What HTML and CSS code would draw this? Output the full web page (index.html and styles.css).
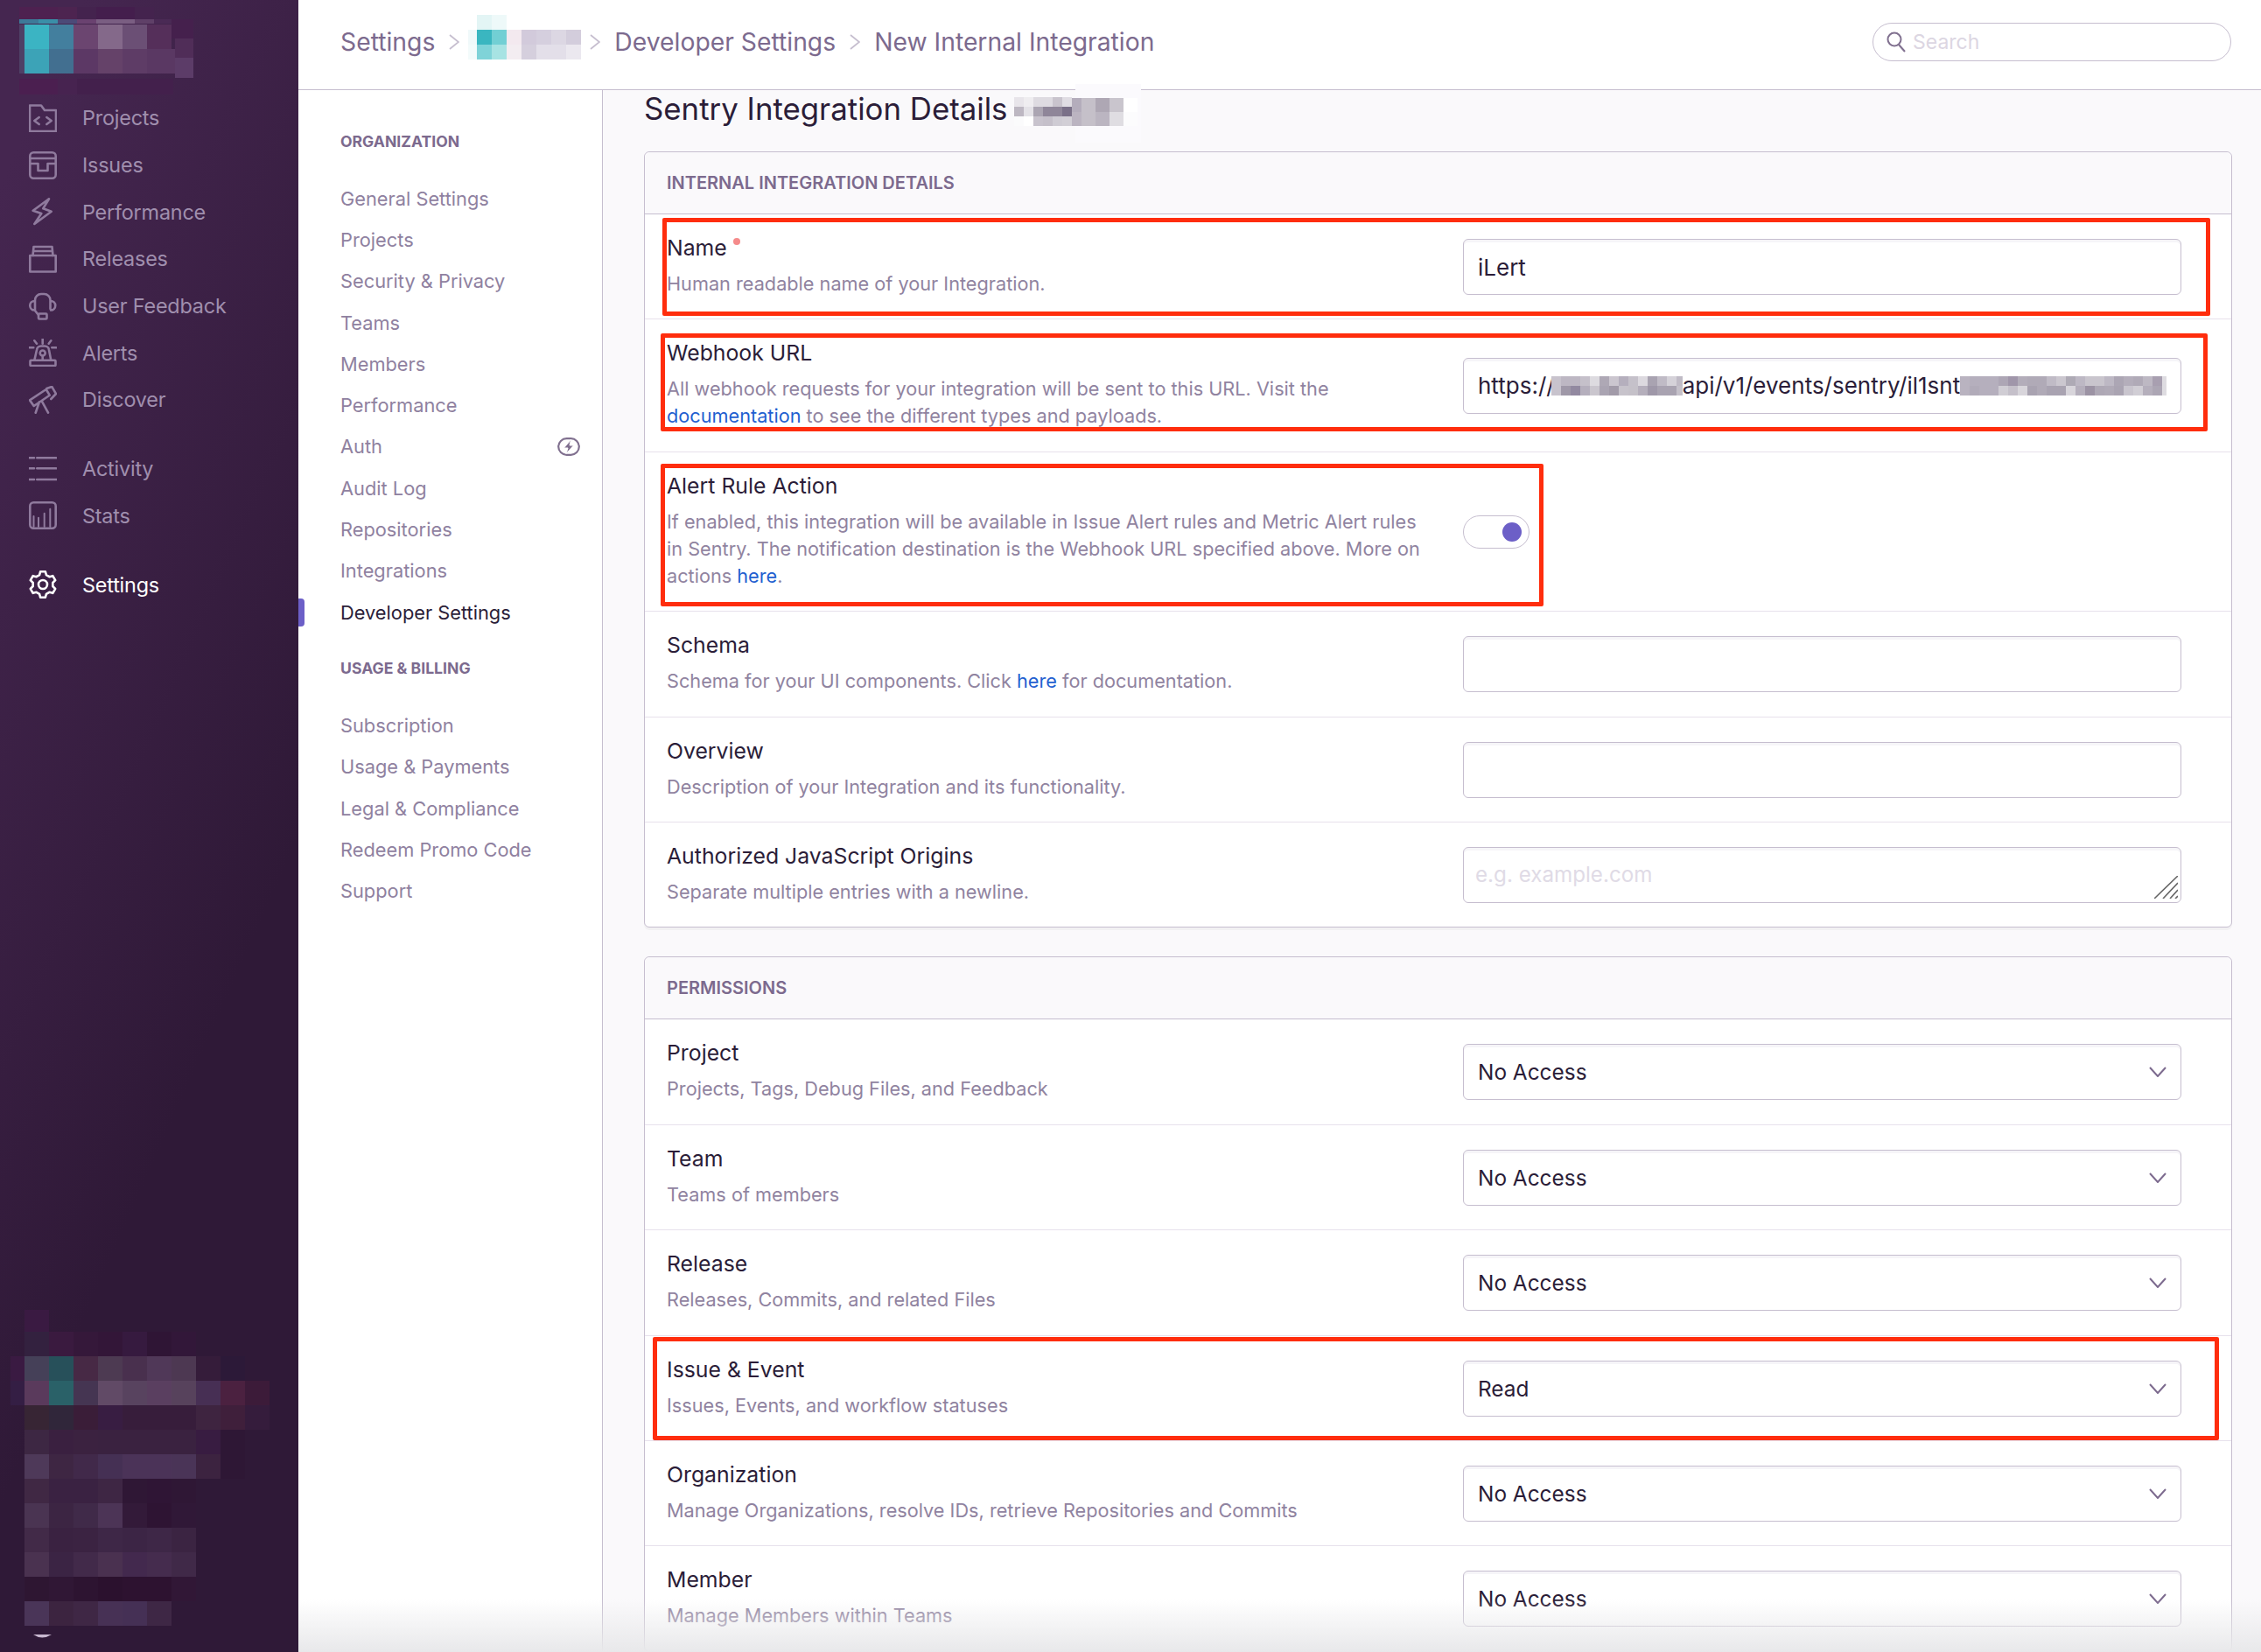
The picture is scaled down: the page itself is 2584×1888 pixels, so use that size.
FILE: index.html

```html
<!DOCTYPE html>
<html lang="en">
<head>
<meta charset="UTF-8">
<title>New Internal Integration</title>
<link rel="stylesheet" href="styles.css">
</head>
<body>
<div class="app">
  <aside class="sidebar">
    <svg class="org-logo" width="341" height="108" viewBox="0 0 341 108">
      <rect x="22" y="8" width="44" height="14" fill="#4e2150"/><rect x="66" y="8" width="22" height="14" fill="#4d2450"/>
      <rect x="88" y="8" width="22" height="14" fill="#44234e"/><rect x="110" y="8" width="44" height="14" fill="#441e4d"/>
      <rect x="154" y="8" width="22" height="14" fill="#44234e"/>
      <rect x="22" y="22" width="22" height="5" fill="#3d7a99"/><rect x="44" y="22" width="22" height="5" fill="#3a8fa8"/>
      <rect x="66" y="22" width="22" height="5" fill="#4c4a78"/><rect x="88" y="22" width="22" height="5" fill="#6a4270"/>
      <rect x="110" y="22" width="44" height="5" fill="#7a5e82"/><rect x="154" y="22" width="22" height="5" fill="#5f4068"/>
      <rect x="176" y="22" width="22" height="5" fill="#4a2a55"/>
      <rect x="22" y="28" width="6" height="56" fill="#4e4066"/>
      <g class="cell-28">
        <rect x="28" y="28" fill="#3bb4c3"/><rect x="56" y="28" fill="#437f9e"/><rect x="84" y="28" fill="#6b4570"/>
        <rect x="112" y="28" fill="#84698a"/><rect x="140" y="28" fill="#6b4f75"/><rect x="168" y="28" fill="#552f5a"/>
        <rect x="28" y="56" fill="#3ca3b7"/><rect x="56" y="56" fill="#426f90"/><rect x="84" y="56" fill="#5c3865"/>
        <rect x="112" y="56" fill="#654269"/><rect x="140" y="56" fill="#5e3c66"/><rect x="168" y="56" fill="#5a3863"/>
      </g>
      <rect x="196" y="22" width="25" height="22" fill="#45204d"/><rect x="200" y="44" width="21" height="22" fill="#502d58"/>
      <rect x="196" y="56" width="4" height="28" fill="#5a3863"/><rect x="200" y="66" width="21" height="23" fill="#5c3c68"/>
      <rect x="22" y="90" width="44" height="18" fill="#4b1f50"/><rect x="66" y="90" width="22" height="18" fill="#472350"/>
      <rect x="88" y="90" width="110" height="18" fill="#43204c"/>
    </svg>

    <ul class="side-group">
      <li class="side-item">
        <svg class="side-icon" viewBox="0 0 32 32"><path d="M1 1.5H14L18 7H31V31H1Z"/><path d="M11.7 15L6.3 19L11.7 23M20.3 15L25.7 19L20.3 23"/></svg>
        Projects
      </li>
      <li class="side-item">
        <svg class="side-icon" viewBox="0 0 32 32"><rect x="1.3" y="1.3" width="29.4" height="29.4" rx="4"/><path d="M1.3 8H30.7M1.3 14H10.5V22H21.5V14H30.7"/></svg>
        Issues
      </li>
      <li class="side-item">
        <svg class="side-icon" viewBox="0 0 32 32"><path d="M23 1.3L4.7 14.7L14.3 18L6.3 30L25.7 15.7L16.3 12.3Z"/></svg>
        Performance
      </li>
      <li class="side-item">
        <svg class="side-icon" viewBox="0 0 32 32"><rect x="1.3" y="12" width="29.4" height="18.5"/><path d="M4.5 12L5.5 2H26.5L27.5 12M5 7H27"/></svg>
        Releases
      </li>
      <li class="side-item">
        <svg class="side-icon" viewBox="0 0 32 32"><path d="M7 21V9A7 7 0 0 1 14 2H17.5A7 7 0 0 1 24.5 9V19M6.5 10A5 5 0 0 0 6.5 20.500M25 10A5 5 0 0 1 25 20.500M7 21L11 26"/><rect x="11" y="24.500" width="9.500" height="6" rx="1"/></svg>
        User Feedback
      </li>
      <li class="side-item">
        <svg class="side-icon" viewBox="0 0 32 32"><path d="M15.700 .3V5.700M6.300 2.300L9 5.700M25.300 2.300L22.700 5.700M.3 10.300H5.300M26.300 10.300H31.300M6.300 24.700L9 13A5 5 0 0 1 14 8.500H18A5 5 0 0 1 23 13L25.300 24.700"/><rect x="1.500" y="24.700" width="29" height="6.300" rx="1"/><circle cx="15.700" cy="16.500" r="3"/><path d="M15.700 19.500V24"/></svg>
        Alerts
      </li>
      <li class="side-item">
        <svg class="side-icon" viewBox="0 0 32 32"><path d="M1 16.300L5.700 23L23.700 10.700L19.700 4ZM20.300 3L26.300 .9L31 9L25.300 15M12 18.300L7.700 30.700M15.300 18.300L22 30.700"/></svg>
        Discover
      </li>
    </ul>

    <ul class="side-group">
      <li class="side-item">
        <svg class="side-icon" viewBox="0 0 32 32"><path d="M.3 3.300H6M9.300 3.300H31.300M.3 15.300H6M9.300 15.300H31.300M.3 28H6M9.300 28H31.300"/></svg>
        Activity
      </li>
      <li class="side-item">
        <svg class="side-icon" viewBox="0 0 32 32"><rect x="1.300" y="1.300" width="29.400" height="29.400" rx="4"/><path d="M5.500 29V17M11 29V18.700M17.700 29V13.700M24.300 29V8.700" stroke-width="2"/></svg>
        Stats
      </li>
    </ul>

    <ul class="side-group">
      <li class="side-item side-item-active">
        <svg class="side-icon" viewBox="0 0 32 32"><path d="M12.070 5.190L13.140 1.280H18.860L19.930 5.190L23.390 7.190L27.320 6.160L30.180 11.120L27.330 14V18L30.180 20.880L27.320 25.840L23.390 24.810L19.930 26.810L18.860 30.720H13.140L12.070 26.810L8.610 24.810L4.680 25.840L1.820 20.880L4.670 18V14L1.820 11.120L4.680 6.160L8.610 7.190Z"/><circle cx="16" cy="16" r="5"/></svg>
        Settings
      </li>
    </ul>

    <svg class="org-switcher" width="341" height="391" viewBox="0 0 341 391">
      <rect x="12" y="53" width="16" height="28" fill="#3a1a42"/><rect x="12" y="81" width="16" height="28" fill="#341e44"/>
      <g class="cell-28">
        <rect x="28" y="0" fill="#3a1a42"/>
        <rect x="28" y="25" fill="#33213f"/><rect x="56" y="25" fill="#3a1a3f"/><rect x="84" y="25" fill="#35183a"/><rect x="112" y="25" fill="#331638"/><rect x="140" y="25" fill="#361a3f"/><rect x="168" y="25" fill="#2f1535"/><rect x="196" y="25" fill="#321739"/>
        <rect x="28" y="53" fill="#454058"/><rect x="56" y="53" fill="#27505a"/><rect x="84" y="53" fill="#472945"/><rect x="112" y="53" fill="#4d3a52"/><rect x="140" y="53" fill="#49304e"/><rect x="168" y="53" fill="#503858"/><rect x="196" y="53" fill="#4d3852"/><rect x="224" y="53" fill="#351c3a"/><rect x="252" y="53" fill="#2c1938"/>
        <rect x="28" y="81" fill="#5a3a5c"/><rect x="56" y="81" fill="#2a6168"/><rect x="84" y="81" fill="#453552"/><rect x="112" y="81" fill="#614a66"/><rect x="140" y="81" fill="#58435f"/><rect x="168" y="81" fill="#5a3f60"/><rect x="196" y="81" fill="#57425c"/><rect x="224" y="81" fill="#472f54"/><rect x="252" y="81" fill="#4b2140"/><rect x="280" y="81" fill="#3c1b39"/>
        <rect x="28" y="109" fill="#372534"/><rect x="56" y="109" fill="#30263a"/><rect x="84" y="109" fill="#3a1d38"/><rect x="112" y="109" fill="#381d42"/><rect x="140" y="109" fill="#371d3b"/><rect x="168" y="109" fill="#371d3b"/><rect x="196" y="109" fill="#371d3b"/><rect x="224" y="109" fill="#3e2440"/><rect x="252" y="109" fill="#3f1f3b"/><rect x="280" y="109" fill="#351c3c"/>
        <rect x="28" y="137" fill="#3d2743"/><rect x="56" y="137" fill="#3a2040"/><rect x="84" y="137" fill="#3b2240"/><rect x="112" y="137" fill="#3a2240"/><rect x="140" y="137" fill="#3a2240"/><rect x="168" y="137" fill="#3a2240"/><rect x="196" y="137" fill="#3a2240"/><rect x="224" y="137" fill="#381c41"/><rect x="252" y="137" fill="#2e1735"/>
        <rect x="28" y="165" fill="#4e3959"/><rect x="56" y="165" fill="#3e2643"/><rect x="84" y="165" fill="#41294a"/><rect x="112" y="165" fill="#453054"/><rect x="140" y="165" fill="#4b3358"/><rect x="168" y="165" fill="#4b3358"/><rect x="196" y="165" fill="#4a3457"/><rect x="224" y="165" fill="#3c2340"/><rect x="252" y="165" fill="#2e1735"/>
        <rect x="28" y="193" fill="#402844"/><rect x="56" y="193" fill="#3a2242"/><rect x="84" y="193" fill="#3a2242"/><rect x="112" y="193" fill="#3e2644"/><rect x="140" y="193" fill="#2f1735"/><rect x="168" y="193" fill="#2f1535"/><rect x="196" y="193" fill="#2f1735"/>
        <rect x="28" y="221" fill="#4a3452"/><rect x="56" y="221" fill="#3c2543"/><rect x="84" y="221" fill="#402a49"/><rect x="112" y="221" fill="#4c3456"/><rect x="140" y="221" fill="#331a39"/><rect x="168" y="221" fill="#2e1433"/><rect x="196" y="221" fill="#301837"/>
        <rect x="28" y="249" fill="#422a48"/><rect x="56" y="249" fill="#3a2241"/><rect x="84" y="249" fill="#3b2342"/><rect x="112" y="249" fill="#3e2747"/><rect x="140" y="249" fill="#3c2545"/><rect x="168" y="249" fill="#3e2747"/><rect x="196" y="249" fill="#3b2442"/>
        <rect x="28" y="277" fill="#4a3250"/><rect x="56" y="277" fill="#3b2444"/><rect x="84" y="277" fill="#422a4a"/><rect x="112" y="277" fill="#4a3150"/><rect x="140" y="277" fill="#43294e"/><rect x="168" y="277" fill="#452c4e"/><rect x="196" y="277" fill="#402948"/>
        <rect x="28" y="305" fill="#2e1632"/><rect x="56" y="305" fill="#301735"/><rect x="84" y="305" fill="#2d1431"/><rect x="112" y="305" fill="#2b112e"/><rect x="140" y="305" fill="#2d1230"/><rect x="168" y="305" fill="#2d1230"/><rect x="196" y="305" fill="#311736"/>
        <rect x="28" y="333" fill="#4a3558"/><rect x="56" y="333" fill="#3c2440"/><rect x="84" y="333" fill="#3f2745"/><rect x="112" y="333" fill="#473155"/><rect x="140" y="333" fill="#453055"/><rect x="168" y="333" fill="#3e2745"/>
      </g>
      <path d="M38 371H59Q48 378 38 371Z" fill="#c9b8d0"/>
    </svg>
  </aside>

  <div class="main">
    <header class="topbar">
      <div class="crumbs">
        <span class="crumb">Settings</span>
        <svg class="crumb-sep" viewBox="0 0 12 18"><path d="M1 1L11 9L1 17"/></svg>
        <svg class="crumb-org" width="129" height="51" viewBox="0 0 129 51">
          <g class="cell-17">
            <rect x="10" y="0" fill="#e3f5f5"/><rect x="27" y="0" fill="#eef9f9"/>
            <rect x="0" y="17" fill="#f0f9fa"/><rect x="10" y="17" fill="#3ab6c0"/><rect x="27" y="17" fill="#72cfd4"/><rect x="44" y="17" fill="#f3e9ef"/><rect x="61" y="17" fill="#d2cadb"/><rect x="78" y="17" fill="#d5cfde"/><rect x="95" y="17" fill="#dcd7e3"/><rect x="112" y="17" fill="#d3cddc"/>
            <rect x="0" y="34" fill="#f3fbfb"/><rect x="10" y="34" fill="#7fd3d8"/><rect x="27" y="34" fill="#a7e3e3"/><rect x="44" y="34" fill="#f3edf1"/><rect x="61" y="34" fill="#d5cfdd"/><rect x="78" y="34" fill="#e3dfe9"/><rect x="95" y="34" fill="#e3dfe9"/><rect x="112" y="34" fill="#ebe8ef"/>
          </g>
        </svg>
        <svg class="crumb-sep" viewBox="0 0 12 18"><path d="M1 1L11 9L1 17"/></svg>
        <span class="crumb">Developer Settings</span>
        <svg class="crumb-sep" viewBox="0 0 12 18"><path d="M1 1L11 9L1 17"/></svg>
        <span class="crumb">New Internal Integration</span>
      </div>
      <div class="search">
        <svg class="search-icon" viewBox="0 0 22 24"><circle cx="9" cy="9" r="7.500"/><path d="M14 15L21 23"/></svg>
        <span>Search</span>
      </div>
    </header>

    <div class="page">
      <nav class="sidenav">
        <h4 class="nav-title">ORGANIZATION</h4>
        <a class="nav-item">General Settings</a>
        <a class="nav-item">Projects</a>
        <a class="nav-item">Security &amp; Privacy</a>
        <a class="nav-item">Teams</a>
        <a class="nav-item">Members</a>
        <a class="nav-item">Performance</a>
        <a class="nav-item">Auth
          <svg class="nav-badge" viewBox="0 0 26 21"><rect x="1.200" y="1.200" width="23.600" height="18.600" rx="9.300"/><path class="bolt" d="M15.500 2.500L7.500 12H12L10 18.500L18.500 9H14Z"/></svg>
        </a>
        <a class="nav-item">Audit Log</a>
        <a class="nav-item">Repositories</a>
        <a class="nav-item">Integrations</a>
        <a class="nav-item nav-item-active">Developer Settings</a>
        <h4 class="nav-title">USAGE &amp; BILLING</h4>
        <a class="nav-item">Subscription</a>
        <a class="nav-item">Usage &amp; Payments</a>
        <a class="nav-item">Legal &amp; Compliance</a>
        <a class="nav-item">Redeem Promo Code</a>
        <a class="nav-item">Support</a>
      </nav>

      <main class="content">
        <h2 class="page-title">Sentry Integration Details
          <svg class="title-blur" width="145" height="67" viewBox="0 0 145 67">
            <rect x="70" y="0" width="75" height="67" fill="#fbfafd"/>
            <g class="cell-11">
              <rect x="0" y="15" fill="#e8e5ea"/><rect x="11" y="15" fill="#efedf0"/><rect x="22" y="15" fill="#dedbe1"/><rect x="33" y="15" fill="#dedbe1"/><rect x="44" y="15" fill="#c9c4cd"/><rect x="55" y="15" fill="#e0dde3"/>
              <rect x="0" y="26" fill="#bdb7c2"/><rect x="11" y="26" fill="#e4e2e7"/><rect x="22" y="26" fill="#aba5b2"/><rect x="33" y="26" fill="#8f8699"/><rect x="44" y="26" fill="#8f8699"/><rect x="55" y="26" fill="#7a7088"/>
              <rect x="0" y="37" fill="#fbfbfc"/><rect x="11" y="37" fill="#ffffff"/><rect x="22" y="37" fill="#c8c3cd"/><rect x="33" y="37" fill="#c5c0ca"/><rect x="44" y="37" fill="#cfccd4"/><rect x="55" y="37" fill="#d2cfd6"/>
            </g>
            <rect x="66" y="16" width="11" height="16" fill="#b4adbc"/><rect x="77" y="16" width="16" height="16" fill="#c5c0c9"/><rect x="93" y="16" width="16" height="16" fill="#aea7b4"/><rect x="109" y="16" width="16" height="16" fill="#c9c5cd"/><rect x="125" y="16" width="16" height="16" fill="#ffffff"/>
            <rect x="66" y="32" width="11" height="16" fill="#bbb4c1"/><rect x="77" y="32" width="16" height="16" fill="#c5c0c9"/><rect x="93" y="32" width="16" height="16" fill="#bbb5c1"/><rect x="109" y="32" width="16" height="16" fill="#dfdde2"/><rect x="125" y="32" width="16" height="16" fill="#fcfcfd"/>
          </svg>
        </h2>

        <section class="panel">
          <div class="panel-head">INTERNAL INTEGRATION DETAILS</div>

          <div class="row">
            <div class="row-label">
              <div class="label">Name<span class="required"></span></div>
              <div class="desc">Human readable name of your Integration.</div>
            </div>
            <div class="field">iLert</div>
            <div class="mark mark-name"></div>
          </div>

          <div class="row">
            <div class="row-label">
              <div class="label">Webhook URL</div>
              <div class="desc">All webhook requests for your integration will be sent to this URL. Visit the<br><a>documentation</a> to see the different types and payloads.</div>
            </div>
            <div class="field field-url">https://<svg class="url-blur" width="150" height="22" viewBox="0 0 150 22">
                <g class="cell-11">
                  <rect x="0" y="0" fill="#c8c3cd"/><rect x="11" y="0" fill="#bdb7c3"/><rect x="22" y="0" fill="#bdb7c3"/><rect x="33" y="0" fill="#c5c0ca"/><rect x="44" y="0" fill="#dddbe0"/><rect x="55" y="0" fill="#aea8b5"/><rect x="66" y="0" fill="#cbc6cf"/><rect x="77" y="0" fill="#b5afbd"/><rect x="88" y="0" fill="#c5c1ca"/><rect x="99" y="0" fill="#dcd9df"/><rect x="110" y="0" fill="#a9a3b1"/><rect x="121" y="0" fill="#c0bbc6"/><rect x="132" y="0" fill="#d5d2d9"/><rect x="143" y="0" fill="#c0bbc6"/>
                  <rect x="0" y="11" fill="#c8c3cd"/><rect x="11" y="11" fill="#9f98a8"/><rect x="22" y="11" fill="#9289a0"/><rect x="33" y="11" fill="#b5afbd"/><rect x="44" y="11" fill="#cac6ce"/><rect x="55" y="11" fill="#aaa4b2"/><rect x="66" y="11" fill="#a29ba9"/><rect x="77" y="11" fill="#c7c3cb"/><rect x="88" y="11" fill="#c5c1c9"/><rect x="99" y="11" fill="#b5afbc"/><rect x="110" y="11" fill="#9f98a9"/><rect x="121" y="11" fill="#a9a3b1"/><rect x="132" y="11" fill="#a9a3b1"/><rect x="143" y="11" fill="#c5c1ca"/>
                </g>
              </svg>api/v1/events/sentry/il1snt<svg class="url-blur" width="236" height="22" viewBox="0 0 236 22">
                <g class="cell-11">
                  <rect x="0" y="0" fill="#b9b3c0"/><rect x="11" y="0" fill="#b5afbd"/><rect x="22" y="0" fill="#b5afbd"/><rect x="33" y="0" fill="#b5afbd"/><rect x="44" y="0" fill="#ada6b5"/><rect x="55" y="0" fill="#a096aa"/><rect x="66" y="0" fill="#b3adba"/><rect x="77" y="0" fill="#b0aab7"/><rect x="88" y="0" fill="#b0aab7"/><rect x="99" y="0" fill="#c0bbc6"/><rect x="110" y="0" fill="#cbc7cf"/><rect x="121" y="0" fill="#aeaab5"/><rect x="132" y="0" fill="#bdb8c4"/><rect x="143" y="0" fill="#c9c5cd"/><rect x="154" y="0" fill="#c9c5cd"/><rect x="165" y="0" fill="#bdb8c4"/><rect x="176" y="0" fill="#aca6b4"/><rect x="187" y="0" fill="#b4aebb"/><rect x="198" y="0" fill="#b0aab7"/><rect x="209" y="0" fill="#bdb8c3"/><rect x="220" y="0" fill="#a89fb0"/><rect x="231" y="0" fill="#dedce1"/>
                  <rect x="0" y="11" fill="#b9b3c0"/><rect x="11" y="11" fill="#b1abb9"/><rect x="22" y="11" fill="#b5afbd"/><rect x="33" y="11" fill="#b5afbd"/><rect x="44" y="11" fill="#d0cdd4"/><rect x="55" y="11" fill="#c5c0ca"/><rect x="66" y="11" fill="#d8d5db"/><rect x="77" y="11" fill="#a9a3b1"/><rect x="88" y="11" fill="#b0aab7"/><rect x="99" y="11" fill="#a9a3b1"/><rect x="110" y="11" fill="#a9a3b1"/><rect x="121" y="11" fill="#d8d5db"/><rect x="132" y="11" fill="#b5afbc"/><rect x="143" y="11" fill="#9c93a4"/><rect x="154" y="11" fill="#aea8b5"/><rect x="165" y="11" fill="#b0aab7"/><rect x="176" y="11" fill="#aaa4b2"/><rect x="187" y="11" fill="#c9c5ce"/><rect x="198" y="11" fill="#d1ced5"/><rect x="209" y="11" fill="#b5afbc"/><rect x="220" y="11" fill="#aca6b4"/><rect x="231" y="11" fill="#dedce1"/>
                </g>
              </svg></div>
            <div class="mark mark-webhook"></div>
          </div>

          <div class="row">
            <div class="row-label">
              <div class="label">Alert Rule Action</div>
              <div class="desc">If enabled, this integration will be available in Issue Alert rules and Metric Alert rules<br>in Sentry. The notification destination is the Webhook URL specified above. More on<br>actions <a>here</a>.</div>
            </div>
            <div class="switch"><span class="switch-knob"></span></div>
            <div class="mark mark-alert"></div>
          </div>

          <div class="row">
            <div class="row-label">
              <div class="label">Schema</div>
              <div class="desc">Schema for your UI components. Click <a>here</a> for documentation.</div>
            </div>
            <div class="field"></div>
          </div>

          <div class="row">
            <div class="row-label">
              <div class="label">Overview</div>
              <div class="desc">Description of your Integration and its functionality.</div>
            </div>
            <div class="field"></div>
          </div>

          <div class="row row-last">
            <div class="row-label">
              <div class="label">Authorized JavaScript Origins</div>
              <div class="desc">Separate multiple entries with a newline.</div>
            </div>
            <div class="field field-placeholder">e.g. example.com
              <svg class="resize-grip" viewBox="0 0 27 26"><path d="M0 26L27 0M10 26L27 8M18 26L27 16M24 26L27 23"/></svg>
            </div>
          </div>
        </section>

        <section class="panel panel-permissions">
          <div class="panel-head">PERMISSIONS</div>

          <div class="row">
            <div class="row-label">
              <div class="label">Project</div>
              <div class="desc">Projects, Tags, Debug Files, and Feedback</div>
            </div>
            <div class="field field-select">No Access<svg class="chevron" viewBox="0 0 20 12"><path d="M1 1L10 11L19 1"/></svg></div>
          </div>

          <div class="row">
            <div class="row-label">
              <div class="label">Team</div>
              <div class="desc">Teams of members</div>
            </div>
            <div class="field field-select">No Access<svg class="chevron" viewBox="0 0 20 12"><path d="M1 1L10 11L19 1"/></svg></div>
          </div>

          <div class="row">
            <div class="row-label">
              <div class="label">Release</div>
              <div class="desc">Releases, Commits, and related Files</div>
            </div>
            <div class="field field-select">No Access<svg class="chevron" viewBox="0 0 20 12"><path d="M1 1L10 11L19 1"/></svg></div>
          </div>

          <div class="row">
            <div class="row-label">
              <div class="label">Issue &amp; Event</div>
              <div class="desc">Issues, Events, and workflow statuses</div>
            </div>
            <div class="field field-select">Read<svg class="chevron" viewBox="0 0 20 12"><path d="M1 1L10 11L19 1"/></svg></div>
            <div class="mark mark-issue"></div>
          </div>

          <div class="row">
            <div class="row-label">
              <div class="label">Organization</div>
              <div class="desc">Manage Organizations, resolve IDs, retrieve Repositories and Commits</div>
            </div>
            <div class="field field-select">No Access<svg class="chevron" viewBox="0 0 20 12"><path d="M1 1L10 11L19 1"/></svg></div>
          </div>

          <div class="row row-last">
            <div class="row-label">
              <div class="label">Member</div>
              <div class="desc">Manage Members within Teams</div>
            </div>
            <div class="field field-select">No Access<svg class="chevron" viewBox="0 0 20 12"><path d="M1 1L10 11L19 1"/></svg></div>
          </div>
        </section>
      </main>
    </div>

    <div class="bottom-fade"></div>
  </div>
</div>
</body>
</html>
```

FILE: styles.css

```css
html, body {
  margin: 0;
  height: 100%;
  overflow: hidden;
}

body {
  font-family: Inter, "Liberation Sans", sans-serif;
  color: #2b1d38;
  background-color: #faf9fb;
}

svg {
  display: block;
}

ul {
  list-style: none;
  margin: 0;
  padding: 0;
}

.app {
  display: flex;
  height: 1888px;
}

/* mosaic cells */
.cell-28 rect { width: 28px; height: 28px; }
.cell-17 rect { width: 17px; height: 17px; }
.cell-11 rect { width: 11px; height: 11px; }

/* left bar */
.sidebar {
  flex: 0 0 341px;
  display: flex;
  flex-direction: column;
  background: linear-gradient(294deg, #2f1937 35%, #452650 92%);
}

.org-logo {
  flex: none;
}

.side-group + .side-group {
  margin-top: 25px;
}

.side-item {
  display: flex;
  align-items: center;
  height: 53.7px;
  padding-left: 33px;
  font-size: 23.4px;
  color: #a08fae;
  letter-spacing: -0.2px;
}

.side-icon {
  flex: none;
  width: 32px;
  height: 32px;
  margin-right: 29px;
  fill: none;
  stroke: #8f7a9d;
  stroke-width: 2.6;
  stroke-linejoin: round;
  stroke-linecap: round;
}

.side-item-active {
  color: #fff;
}

.side-item-active .side-icon {
  stroke: #fff;
}

.org-switcher {
  margin-top: auto;
  flex: none;
}

/* top bar */
.main {
  flex: 1;
  min-width: 0;
  position: relative;
  display: flex;
  flex-direction: column;
}

.topbar {
  flex: none;
  display: flex;
  align-items: center;
  justify-content: space-between;
  height: 96px;
  padding: 0 34px 6px 48px;
  background-color: #fff;
  border-bottom: 1px solid #c6becf;
}

.crumbs {
  display: flex;
  align-items: center;
}

.crumb {
  font-size: 28.3px;
  color: #7c6a8e;
}

.crumb-sep {
  flex: none;
  width: 12px;
  height: 18px;
  margin: 0 16px;
  fill: none;
  stroke: #c6becf;
  stroke-width: 1.8;
}

.crumb-org {
  margin: 0 -6px 11px -6px;
}

.search {
  display: flex;
  align-items: center;
  width: 410px;
  height: 44px;
  box-sizing: border-box;
  padding-left: 15px;
  border: 1px solid #c6becf;
  border-radius: 22px;
  font-size: 23px;
  color: #dcd6e2;
}

.search-icon {
  width: 22px;
  height: 24px;
  margin-right: 8px;
  fill: none;
  stroke: #80708f;
  stroke-width: 2;
}

/* settings nav */
.page {
  flex: 1;
  min-height: 0;
  display: flex;
}

.sidenav {
  flex: 0 0 348px;
  box-sizing: border-box;
  padding-top: 44px;
  background-color: #fff;
  border-right: 1px solid #c6becf;
}

.nav-title {
  margin: 0 0 26px 48px;
  font-size: 17.6px;
  line-height: 30px;
  font-weight: 700;
  color: #7c6a8e;
}

.nav-item + .nav-title {
  margin-top: 26px;
}

.nav-item {
  position: relative;
  display: flex;
  align-items: center;
  justify-content: space-between;
  height: 47.3px;
  padding: 0 25px 0 48px;
  font-size: 21.8px;
  color: #8f81a0;
}

.nav-item-active {
  color: #2b1d38;
}

.nav-item-active::before {
  content: "";
  position: absolute;
  left: 0;
  top: 8px;
  width: 7px;
  height: 32px;
  background-color: #6c5fc7;
  border-radius: 0 4px 4px 0;
}

.nav-badge {
  width: 26px;
  height: 21px;
  fill: none;
  stroke: #80708f;
  stroke-width: 2.2;
}

.nav-badge .bolt {
  fill: #80708f;
  stroke: #fff;
  stroke-width: 1;
}

/* content */
.content {
  flex: 1;
  min-width: 0;
  padding: 1px 33px 0 47px;
}

.page-title {
  position: relative;
  display: flex;
  align-items: center;
  height: 40px;
  margin: 0 0 29px;
  font-size: 34.8px;
  font-weight: 400;
  color: #2b1d38;
}

.title-blur {
  position: absolute;
  left: 423px;
  top: -8px;
}

.panel {
  background-color: #fff;
  border: 1px solid #c6becf;
  border-radius: 6px;
  box-shadow: 0 3px 0 rgba(0, 0, 0, 0.03);
}

.panel-permissions {
  margin-top: 33px;
}

.panel-head {
  height: 71px;
  display: flex;
  align-items: center;
  padding: 0 0 1px 25px;
  box-sizing: border-box;
  font-size: 20px;
  font-weight: 600;
  color: #7c6a8e;
  background-color: #faf9fb;
  border-bottom: 1px solid #c6becf;
  border-radius: 6px 6px 0 0;
}

.row {
  position: relative;
  display: flex;
  align-items: center;
  padding: 25px 57px 24.4px 25px;
  border-bottom: 1px solid #e7e1ec;
}

.row-last {
  border-bottom: none;
}

.row-label {
  flex: 0 0 910px;
}

.label {
  font-size: 24.8px;
  line-height: 26px;
  margin-bottom: 13px;
  color: #2b1d38;
}

.required {
  display: inline-block;
  width: 8px;
  height: 8px;
  margin-left: 7px;
  vertical-align: 12px;
  border-radius: 50%;
  background-color: #f58b8b;
}

.desc {
  font-size: 21.7px;
  line-height: 31px;
  color: #9083a0;
}

.desc a {
  color: #1f5fd0;
}

.field {
  position: relative;
  flex: 1;
  min-width: 0;
  display: flex;
  align-items: center;
  height: 64px;
  box-sizing: border-box;
  padding: 0 15px 0 16px;
  font-size: 26px;
  white-space: nowrap;
  color: #2b1d38;
  border: 1px solid #c6becf;
  border-radius: 6px;
  background-color: #fff;
  box-shadow: inset 0 3px 0 #f6f5f8;
}

.url-blur {
  flex: none;
}

.field-url .url-blur:first-of-type {
  margin-left: -4px;
}

.field-placeholder {
  padding-left: 13px;
  font-size: 24.2px;
  color: #e0dbe6;
}

.resize-grip {
  position: absolute;
  right: 3px;
  bottom: 4px;
  width: 27px;
  height: 26px;
  fill: none;
  stroke: #666;
  stroke-width: 1.6;
}

.field-select {
  justify-content: space-between;
  font-size: 24.4px;
}

.chevron {
  flex: none;
  width: 20px;
  height: 12px;
  margin-right: 1px;
  fill: none;
  stroke: #7c6a8e;
  stroke-width: 2;
}

.switch {
  display: flex;
  justify-content: flex-end;
  align-items: center;
  box-sizing: border-box;
  width: 76px;
  height: 38px;
  padding-right: 8px;
  border: 1px solid #c6becf;
  border-radius: 19px;
}

.switch-knob {
  width: 22px;
  height: 22px;
  border-radius: 50%;
  background-color: #6c5fc7;
}

/* red annotations drawn over the rows */
.mark {
  position: absolute;
  box-sizing: border-box;
  border: 5px solid #ff2d0d;
  border-radius: 2px;
}

.mark-name { left: 20px; top: 4px; width: 1769px; height: 112px; }
.mark-webhook { left: 18px; top: 16px; width: 1768px; height: 112px; }
.mark-alert { left: 18px; top: 13px; width: 1009px; height: 163px; }
.mark-issue { left: 9px; top: 1px; width: 1790px; height: 118px; }

.bottom-fade {
  position: absolute;
  left: 0;
  right: 0;
  bottom: 0;
  height: 60px;
  background: linear-gradient(rgba(232, 232, 234, 0), rgba(232, 232, 234, 1));
  pointer-events: none;
}
```
